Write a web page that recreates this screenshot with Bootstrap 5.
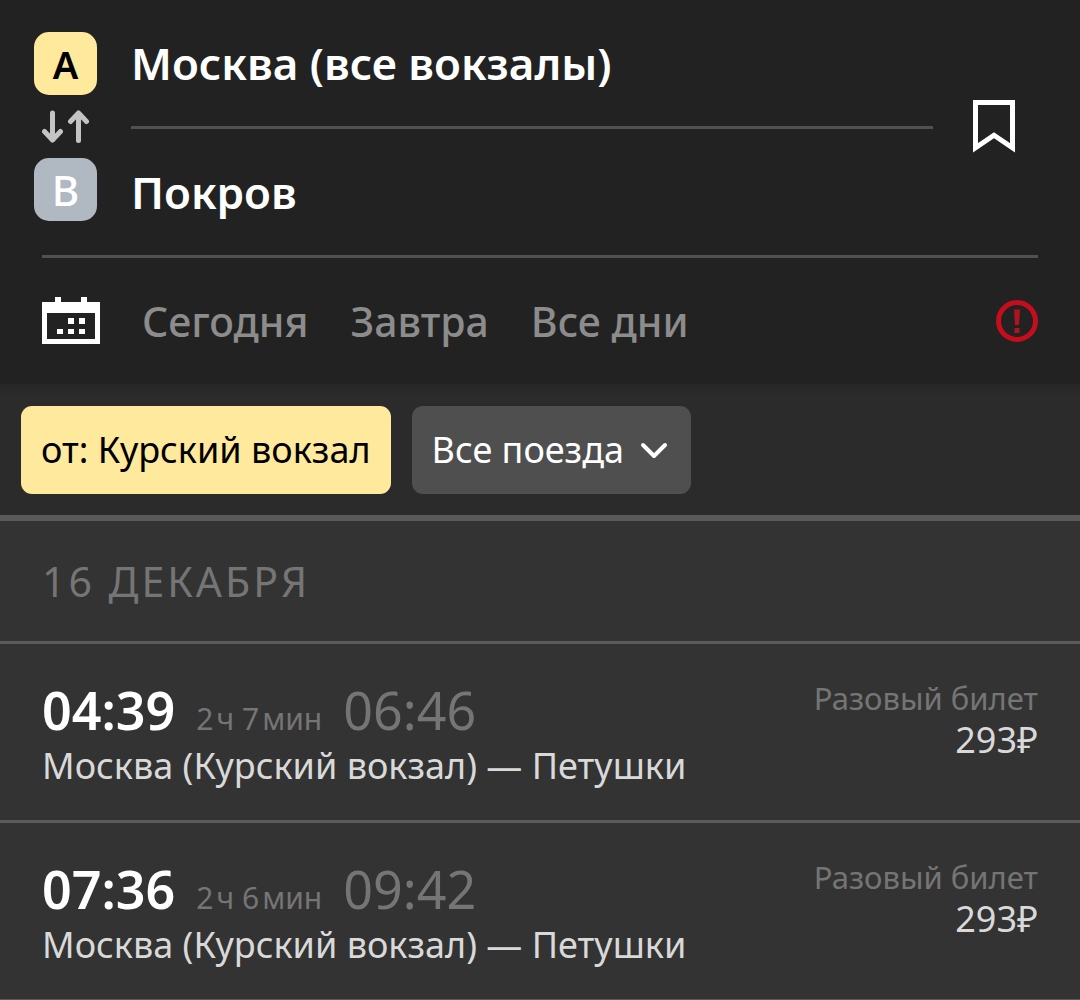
<!DOCTYPE html>
<html lang="ru" data-bs-theme="dark">
<head>
<meta charset="utf-8">
<meta name="viewport" content="width=device-width, initial-scale=1">
<title>Москва — Покров</title>
<link href="https://cdn.jsdelivr.net/npm/bootstrap@5.3.0/dist/css/bootstrap.min.css" rel="stylesheet">
<style>
  body { background: #333; color: #d9d9d9; font-family: "Noto Sans", "Open Sans", sans-serif; }
  svg { display: block; flex: none; }
  .plain { background: none; border: 0; padding: 0; color: inherit; text-align: left; }
  .search-head { background: #222; }
  .route-form { padding: 32px 42px 32px 34px; }
  .ends { width: 63px; margin-right: 34px; }
  .end-mark { width: 63px; height: 63px; border-radius: 15px; font-weight: 600; }
  .mark-from { background: #ffe99c; color: #000; font-size: 38px; line-height: 38px; }
  .mark-to { background: #b0b8c1; color: #fff; font-size: 42px; line-height: 42px; font-weight: 500; }
  .swap { height: 63px; }
  .station { color: #fff; font-size: 44px; line-height: 62px; font-weight: 600; height: 62px; }
  .split { height: 3px; background: #515151; }
  .fields { gap: 32px; }
  .fav { padding: 68px 23px 0 40px; }
  .days { margin: 0 42px; border-top: 3px solid #515151; height: 129px; gap: 42px; }
  .day { color: #8c8c8c; font-size: 41px; line-height: 54px; font-weight: 500; }
  .filters { background: linear-gradient(#262626, #2b2b2b 12px); border-bottom: 6px solid #5a5a5a; padding: 22px 21px 21px; gap: 21px; }
  .chip { height: 88px; border-radius: 11px; font-size: 36px; line-height: 48px; border: 0; padding: 0 20px; }
  .chip-on, .chip-on:hover { background: #ffe99c; color: #000; }
  .chip-select { background: #4f4f4f none; color: #fff; width: 279px; }
  .chevron { right: 22px; top: 36px; pointer-events: none; }
  .date-title { font-size: 41px; line-height: 54px; letter-spacing: 3px; color: #757575; padding: 33px 42px; border-bottom: 3px solid #5a5a5a; margin: 0; font-weight: 400; }
  .trip { padding: 34px 42px 30px; border-bottom: 3px solid #5a5a5a; color: #d9d9d9; text-decoration: none; }
  .trip-times { gap: 21px; line-height: 64px; height: 64px; }
  .depart { font-size: 52px; font-weight: 600; color: #fff; }
  .arrive { font-size: 52px; color: #757575; }
  .length { font-size: 30px; color: #757575; }
  .trip-name { font-size: 36px; line-height: 48px; }
  .fare-name { font-size: 31px; line-height: 40px; color: #757575; }
  .fare { font-size: 36px; line-height: 44px; }
</style>
</head>
<body>
<header class="search-head">
  <div class="route-form d-flex align-items-start">
    <div class="ends d-flex flex-column">
      <span class="end-mark mark-from d-flex align-items-center justify-content-center">A</span>
      <button type="button" class="plain swap d-flex align-items-center justify-content-center" aria-label="Поменять местами">
        <svg width="48" height="34" viewBox="0 0 48 34" fill="none" stroke="#c4c4c4" stroke-width="5" stroke-linecap="round" stroke-linejoin="round"><path d="M10.500 3V30M2.500 21.500L10.500 30L18.500 21.500M36.500 30.500V3M28.500 11.500L36.500 3L44.500 11.500"/></svg>
      </button>
      <span class="end-mark mark-to d-flex align-items-center justify-content-center">B</span>
    </div>
    <div class="fields d-flex flex-column flex-grow-1">
      <button type="button" class="plain station">Москва (все вокзалы)</button>
      <div class="split"></div>
      <button type="button" class="plain station">Покров</button>
    </div>
    <button type="button" class="plain fav" aria-label="В избранное">
      <svg width="42" height="53" viewBox="0 0 42 53" fill="none" stroke="#fff" stroke-width="5"><path d="M2.500 2.500H39.500V47.800L21 35.300L2.500 47.800Z"/></svg>
    </button>
  </div>
  <div class="days d-flex align-items-center">
    <button type="button" class="plain" aria-label="Выбрать дату">
      <svg width="58" height="48" viewBox="0 0 58 48" fill="#fff"><path fill-rule="evenodd" d="M0 5H13V0H19V5H39V0H45V5H58V47H0ZM5 16V42H53V16Z"/><path d="M26 21h6v6h-6zM37 21h6v6h-6zM15 32h6v5h-6zM26 32h6v5h-6zM37 32h6v5h-6z"/></svg>
    </button>
    <button type="button" class="plain day">Сегодня</button>
    <button type="button" class="plain day">Завтра</button>
    <button type="button" class="plain day">Все дни</button>
    <button type="button" class="plain ms-auto" aria-label="Предупреждение">
      <svg width="42" height="42" viewBox="0 0 42 42"><circle cx="21" cy="21" r="18.500" fill="none" stroke="#c50d1e" stroke-width="5"/><path fill="#b01320" d="M18 9.500h6l-1 15.500h-4zM18.500 28h5v5h-5z"/></svg>
    </button>
  </div>
</header>
<div class="filters d-flex">
  <button type="button" class="btn chip chip-on" aria-pressed="true">от: Курский вокзал</button>
  <div class="position-relative">
    <select class="form-select chip chip-select" aria-label="Тип поезда"><option>Все поезда</option><option>Экспрессы</option></select>
    <svg class="chevron position-absolute" width="30" height="20" viewBox="0 0 30 20" fill="none" stroke="#fff" stroke-width="4" stroke-linecap="round" stroke-linejoin="round"><path d="M4 3L15 14L26 3"/></svg>
  </div>
</div>
<main>
  <h2 class="date-title">16 ДЕКАБРЯ</h2>
  <a href="#" class="trip d-flex justify-content-between">
    <div>
      <div class="trip-times d-flex align-items-baseline"><span class="depart">04:39</span><span class="length">2&#8202;ч 7&#8202;мин</span><span class="arrive">06:46</span></div>
      <div class="trip-name">Москва (Курский вокзал) — Петушки</div>
    </div>
    <div class="text-end"><div class="fare-name">Разовый билет</div><div class="fare">293₽</div></div>
  </a>
  <a href="#" class="trip d-flex justify-content-between">
    <div>
      <div class="trip-times d-flex align-items-baseline"><span class="depart">07:36</span><span class="length">2&#8202;ч 6&#8202;мин</span><span class="arrive">09:42</span></div>
      <div class="trip-name">Москва (Курский вокзал) — Петушки</div>
    </div>
    <div class="text-end"><div class="fare-name">Разовый билет</div><div class="fare">293₽</div></div>
  </a>
</main>
<script src="https://cdn.jsdelivr.net/npm/bootstrap@5.3.0/dist/js/bootstrap.bundle.min.js"></script>
</body>
</html>
